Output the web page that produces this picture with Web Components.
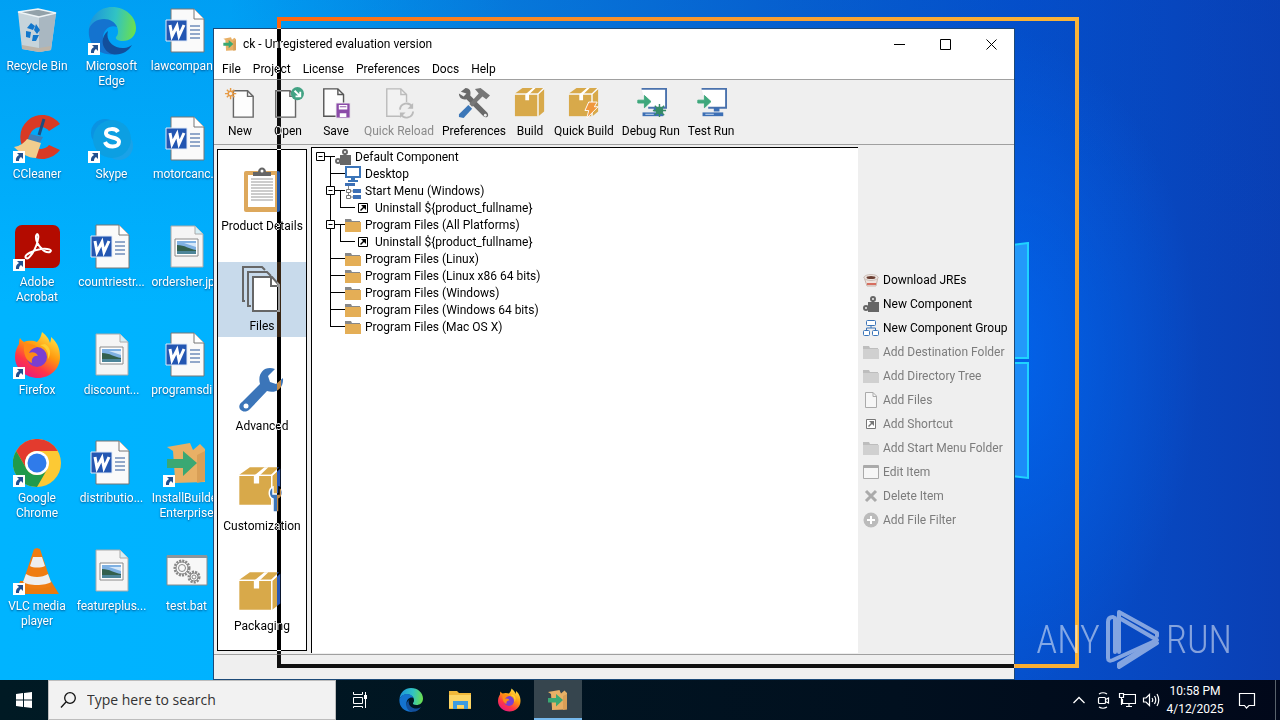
<!DOCTYPE html>
<html lang="en">
<head>
<meta charset="utf-8">
<meta name="viewport" content="width=device-width, initial-scale=1">
<title>ck - Unregistered evaluation version</title>
<style>
    html, body {
        margin: 0;
        height: 100%;
    }
    body {
        display: flex;
        flex-direction: column;
        overflow: hidden;
        font: 12px/15px Roboto, "Open Sans", sans-serif;
        color: #000;
    }
</style>
</head>
<body>
<desk-top>
    <desk-icon icon="bin">Recycle Bin</desk-icon>
    <desk-icon icon="edge" link>Microsoft Edge</desk-icon>
    <desk-icon icon="word">lawcompan...</desk-icon>
    <desk-icon icon="ccleaner" link>CCleaner</desk-icon>
    <desk-icon icon="skype" link>Skype</desk-icon>
    <desk-icon icon="word">motorcanc...</desk-icon>
    <desk-icon icon="acrobat" link>Adobe Acrobat</desk-icon>
    <desk-icon icon="word">countriestr...</desk-icon>
    <desk-icon icon="photo">ordersher.jpg</desk-icon>
    <desk-icon icon="firefox" link>Firefox</desk-icon>
    <desk-icon icon="photo">discount...</desk-icon>
    <desk-icon icon="word">programsdi...</desk-icon>
    <desk-icon icon="chrome" link>Google Chrome</desk-icon>
    <desk-icon icon="word">distributio...</desk-icon>
    <desk-icon icon="installer" link>InstallBuilder Enterprise</desk-icon>
    <desk-icon icon="vlc" link>VLC media player</desk-icon>
    <desk-icon icon="photo">featureplus...</desk-icon>
    <desk-icon icon="bat">test.bat</desk-icon>

    <app-window slot="window" caption="ck - Unregistered evaluation version">
        <menu-item slot="menu">File</menu-item>
        <menu-item slot="menu">Project</menu-item>
        <menu-item slot="menu">License</menu-item>
        <menu-item slot="menu">Preferences</menu-item>
        <menu-item slot="menu">Docs</menu-item>
        <menu-item slot="menu">Help</menu-item>

        <tool-button slot="tools" icon="new" wide>New</tool-button>
        <tool-button slot="tools" icon="open" wide>Open</tool-button>
        <tool-button slot="tools" icon="save" wide>Save</tool-button>
        <tool-button slot="tools" icon="reload" off>Quick Reload</tool-button>
        <tool-button slot="tools" icon="tools">Preferences</tool-button>
        <tool-button slot="tools" icon="box">Build</tool-button>
        <tool-button slot="tools" icon="quickbox">Quick Build</tool-button>
        <tool-button slot="tools" icon="debugrun">Debug Run</tool-button>
        <tool-button slot="tools" icon="testrun">Test Run</tool-button>

        <side-item slot="side" icon="clipboard">Product Details</side-item>
        <side-item slot="side" icon="files" current>Files</side-item>
        <side-item slot="side" icon="wrench">Advanced</side-item>
        <side-item slot="side" icon="custombox">Customization</side-item>
        <side-item slot="side" icon="bigbox">Packaging</side-item>

        <tree-row icon="component" depth="0" open>Default Component</tree-row>
        <tree-row icon="monitor" depth="1">Desktop</tree-row>
        <tree-row icon="startmenu" depth="1" open>Start Menu (Windows)</tree-row>
        <tree-row icon="shortcut" depth="2" last>Uninstall ${product_fullname}</tree-row>
        <tree-row icon="folder" depth="1" open>Program Files (All Platforms)</tree-row>
        <tree-row icon="shortcut" depth="2" last>Uninstall ${product_fullname}</tree-row>
        <tree-row icon="folder" depth="1">Program Files (Linux)</tree-row>
        <tree-row icon="folder" depth="1">Program Files (Linux x86 64 bits)</tree-row>
        <tree-row icon="folder" depth="1">Program Files (Windows)</tree-row>
        <tree-row icon="folder" depth="1">Program Files (Windows 64 bits)</tree-row>
        <tree-row icon="folder" depth="1" last>Program Files (Mac OS X)</tree-row>

        <action-button slot="actions" icon="java">Download JREs</action-button>
        <action-button slot="actions" icon="component">New Component</action-button>
        <action-button slot="actions" icon="group">New Component Group</action-button>
        <action-button slot="actions" icon="greyfolder" off>Add Destination Folder</action-button>
        <action-button slot="actions" icon="greyfolder" off>Add Directory Tree</action-button>
        <action-button slot="actions" icon="greyfile" off>Add Files</action-button>
        <action-button slot="actions" icon="greyshortcut" off>Add Shortcut</action-button>
        <action-button slot="actions" icon="greyfolder" off>Add Start Menu Folder</action-button>
        <action-button slot="actions" icon="edit" off>Edit Item</action-button>
        <action-button slot="actions" icon="delete" off>Delete Item</action-button>
        <action-button slot="actions" icon="plus" off>Add File Filter</action-button>
    </app-window>
</desk-top>
<task-bar></task-bar>

<script>
// shared pieces of artwork
const page = (w, h, f, stroke, fill = '#fdfdfd') =>
    `<path d="M1 1H${w - f}L${w - 1} ${f}V${h - 1}H1Z" fill="${fill}" stroke="${stroke}" stroke-width="1.5"/><path d="M${w - f} 1V${f}H${w - 1}" fill="none" stroke="${stroke}" stroke-width="1.5"/>`;
const carton = '<path d="M1 7 9 1H31L25 7Z" fill="#d8a94a"/><path d="M26 8 32 2V26L26 31Z" fill="#d8a94a"/><path d="M1 8H25V31H1Z" fill="#d8a94a"/><path d="M12 8 20 1H23L16 8V14H12Z" fill="#fff"/><path d="M1 7.5H25.5V31M25.5 7.5 32 1.500" stroke="#fff" fill="none"/>';
const fox = `<defs><linearGradient id="f1" x1=".8" y1="0" x2=".2" y2="1"><stop offset="0" stop-color="#ffe94a"/><stop offset=".4" stop-color="#ff980e"/><stop offset=".7" stop-color="#ff3647"/><stop offset="1" stop-color="#e31587"/></linearGradient></defs>
    <path d="M29 1c5 4 7 7 8 11 1-3 1-4 1-6 8 7 9 14 9 20 0 12-10 21-22 21S2 38 2 26c0-6 2-10 4-13 0-2 0-4 1-6 1 2 3 3 4 4 5-2 10-1 13 0 3-3 4-6 5-10Z" fill="url(#f1)"/>
    <circle cx="24" cy="26" r="10" fill="#7b3fd0"/><path d="M11 12c5 1 10 1 13 4-4 1-7 3-8 6 4-2 8 0 9 3-4-1-7 3-6 7-6-2-9-9-8-20Z" fill="#ff8a16"/><path d="M27 14c6 2 9 7 8 14 4-6 2-12-3-15Z" fill="#ffcf33"/>`;
const edge = `<defs><linearGradient id="e1" x1="0" y1=".4" x2="1" y2=".5"><stop offset="0" stop-color="#1b94dc"/><stop offset=".55" stop-color="#31c3c4"/><stop offset="1" stop-color="#6be04d"/></linearGradient></defs>
    <path d="M1 22C2 9 12 0 24 0c14 0 24 10 24 21 0 9-7 13-13 13-5 0-8-2-7-4 2-2 2-4 2-6 0-7-7-11-14-11C9 13 3 17 1 22Z" fill="url(#e1)"/>
    <path d="M1 22c2-6 8-10 15-10 6 0 11 3 13 8-6-3-14 2-14 11 0 8 6 14 13 16C12 50-1 38 1 22Z" fill="#1473cf"/>
    <path d="M20 24c-3 10 6 18 16 17 3 0 6-2 8-3-4 7-12 11-20 9-10-3-13-16-4-23Z" fill="#124f9c"/>`;
const drawer = `<path d="M4 8 27 4 30 11 37 5 42 10 42 12V43L12 44V40L10 12Z" fill="#e8b066"/><path d="M34 16 42 12V42L34 44Z" fill="#d99f57"/><path d="M4 20H20V12L34 24 20 37V29H4Z" fill="#3aa873"/>`;
const greyFold = '<path d="M0 2H6L7 4H15V15H0Z" fill="#bdbdbd"/><path d="M0 5H16V15H0Z" fill="#d0d0d0"/>';
const screen = `<path d="M7 3V2H33V22H14" fill="#fff" stroke="#4a72ad" stroke-width="2"/><path d="M0 0H7V22H0Z" fill="#efefef"/><path d="M20 22H26V26H20Z" fill="#3c6fb5"/><path d="M8 27H30V31H8Z" fill="#3c6fb5"/><path d="M11 29H20" stroke="#cfe0f2"/><path d="M3 14H10V9L17 15.500 10 22V17H3Z" fill="#3fa77c" stroke="#3fa77c"/>`;

// name: [viewBox, markup]
const ICONS = {
    bin: ['0 0 48 48', '<path d="M5 5 25 2 43 6 38 43 26 45 9 42Z" fill="#c7d4db"/><path d="M26 10 43 6 38 43 26 45Z" fill="#a9b7c1"/><path d="M5 5 25 2 43 6 26 10Z" fill="#93a2aa" stroke="#eef4f7" stroke-width="1.500"/><path d="M9 38 26 41 38 39V43L26 45 9 42Z" fill="#bdb4a8"/><path d="m14 21 4-5 4 3-2 4Zm9-4 4 6-3 4-3-4Zm-10 7 5 1-1 6-4-1Zm7 4h6l-3 6h-4Z" fill="#1277cc"/>'],
    edge: ['0 0 48 48', edge],
    word: ['0 0 48 48', '<path d="M8 2H31L41 12V45H8Z" fill="#fafafa" stroke="#777"/><path d="M31 2V12H41" fill="#fff" stroke="#777"/><path d="M27 19H37M27 23H37M27 27H37M27 31H37" stroke="#2b579a" stroke-width="1.200"/><path d="M3 13H24V34H3Z" fill="#2356b2" stroke="#dfe9f8"/><path d="M7 18 9 29 14 19 16 29 21 18" fill="none" stroke="#fff" stroke-width="3"/>'],
    photo: ['0 0 48 48', '<path d="M8 3H32L40 11V44H8Z" fill="#f5f5f5" stroke="#aaa"/><path d="M32 3V11H40" fill="#d5eef5" stroke="#aaa"/><path d="M12 16H35V33H12Z" fill="#fff" stroke="#8a8a8a"/><path d="M14 18H33V31H14Z" fill="#7fb1e3"/><path d="M14 22c8 0 12 4 19 5v1H14Z" fill="#33604d"/><path d="M14 28H33V31H14Z" fill="#4d8599"/><path d="M21 20H33V24Z" fill="#d5e8fa"/>'],
    ccleaner: ['0 0 48 48', '<path d="M47 9A22 22 0 1 0 47 35L36 30A11 11 0 1 1 36 16Z" fill="#d83a25"/><path d="M31 4 26 20" stroke="#1d4e80" stroke-width="3"/><path d="M17 19 30 22 26 29 14 26Z" fill="#3f7fb8"/><path d="M14 24 28 28 23 43C15 43 7 38 1 32 7 31 11 28 14 24Z" fill="#f1cd8e"/>'],
    skype: ['0 0 48 48', '<circle cx="17" cy="18" r="14" fill="#0a93e2"/><circle cx="31" cy="31" r="14" fill="#1aa2e8"/><circle cx="24" cy="24" r="19" fill="#0c9fe2"/><path d="M30 17c-2-4-12-4-12 1 0 6 13 3 13 9 0 6-12 6-14 0" fill="none" stroke="#fff" stroke-width="4"/>'],
    acrobat: ['0 0 48 48', '<rect x="2" y="2" width="45" height="43" rx="7" fill="#b30b00"/><path d="M13 35c-3-3 8-8 15-9 7-1 12 1 9 3-5 2-15-8-14-16 1-4 3-1 2 3-1 8-9 22-12 19Z" fill="none" stroke="#fff" stroke-width="2"/>'],
    firefox: ['0 0 48 48', fox],
    chrome: ['0 0 48 48', '<circle cx="24" cy="24" r="24" fill="#fcc934"/><path d="M3.200 12A24 24 0 0 1 44.800 12H24A12 12 0 0 0 13.600 30Z" fill="#e33b2e"/><path d="M3.200 12A24 24 0 0 0 24 48L34.400 30A12 12 0 0 1 13.600 30Z" fill="#209a4b"/><circle cx="24" cy="24" r="12" fill="#fff"/><circle cx="24" cy="24" r="9.500" fill="#2f7bea"/>'],
    installer: ['0 0 48 48', drawer],
    vlc: ['0 0 48 48', '<path d="M7 34 38 34 46 47H2Z" fill="#e97a0f"/><path d="M24 1 27 2 39 38C35 43 13 43 9 38L21 2Z" fill="#ef7c11"/><path d="M20 10H29L32 19C28 21 20 21 17 19Z" fill="#eee"/><path d="M13 27C19 31 29 31 35 27L38 35C33 39 15 39 10 35Z" fill="#eee"/>'],
    bat: ['0 0 48 48', '<path d="M4 9H44V38H4Z" fill="#f7f7f7" stroke="#8a8a8a"/><path d="M4 8H44V11H4Z" fill="#8c959b"/><g fill="none" stroke="#888"><circle cx="19" cy="21" r="7" stroke-dasharray="2 1" stroke-width="3"/><circle cx="19" cy="21" r="6" fill="#f7f7f7"/><circle cx="19" cy="21" r="3.500"/><circle cx="31" cy="30" r="5" stroke-dasharray="2 1" stroke-width="3"/><circle cx="31" cy="30" r="4" fill="#f7f7f7"/><circle cx="31" cy="30" r="2"/></g>'],
    link: ['0 0 12 12', '<path d="M0 0H12V12H0Z" fill="#fff"/><path d="M4 2H10V8L8 6C6.500 7 6 8 6 10H3C2.500 7 4 5 6 4Z" fill="#22508f"/>'],
    app: ['0 0 48 48', drawer],

    new: ['0 0 34 34', `<g transform="translate(9 3)">${page(23, 30, 7, '#666')}</g><path d="M7 1V13M1 7H13M3 3 11 11M11 3 3 11" stroke="#e69a45" stroke-width="1.500"/><circle cx="7" cy="7" r="2.500" fill="#efefef" stroke="#e69a45" stroke-width="1.500"/>`],
    open: ['0 0 34 34', `<g transform="translate(3 3)">${page(23, 30, 7, '#666')}</g><circle cx="27" cy="7" r="7" fill="#43a384"/><path d="M24 4 30 10M30 5V10H25" stroke="#fff" stroke-width="2" fill="none"/>`],
    save: ['0 0 34 34', `<g transform="translate(3 1)">${page(23, 31, 7, '#555')}</g><path d="M17 17H32V33H17Z" fill="#8b4ba8" stroke="#efefef"/><path d="M20 19H29V24H20ZM21 28H28V32H21Z" fill="#fff"/><path d="M21 21H28" stroke="#8b4ba8"/>`],
    reload: ['0 0 34 34', `<g transform="translate(3 1)">${page(23, 31, 7, '#bbb', '#f2f2f2')}</g><circle cx="25" cy="25" r="9" fill="#efefef"/><path d="M18 24a7 7 0 0 1 13-3M32 26a7 7 0 0 1-13 3" fill="none" stroke="#bbb" stroke-width="2"/><path d="M32 17V23H26ZM18 33V27H24Z" fill="#bbb"/>`],
    tools: ['0 0 34 34', '<path d="M3 5 8 1C13 1 14 5 13 9L31 27C34 31 30 34 27 31L9 13C5 14 1 12 1 7L6 10 9 7Z" fill="#6a6a6a"/><path d="M18 2 24 1 34 9 30 13 26 10 15 21 12 18 22 7Z" fill="#777"/><path d="M11 19 15 23 6 33 1 32V29Z" fill="#3c77b8"/><circle cx="29" cy="30" r="1.500" fill="#efefef"/>'],
    box: ['0 0 34 34', carton],
    quickbox: ['0 0 34 34', carton + '<path d="M22 16H31L28 21H32L20 33 22 25H18Z" fill="#f0973d" stroke="#fff"/>'],
    debugrun: ['0 0 34 34', screen + '<path d="M26 18V32M19 25H33M21 20 31 30M31 20 21 30" stroke="#368c66" stroke-width="1.500"/><circle cx="26" cy="25" r="4" fill="#368c66"/>'],
    testrun: ['0 0 34 34', screen],

    clipboard: ['0 0 48 48', '<rect x="6" y="5" width="36" height="41" rx="2" fill="#dda85c"/><path d="M10 9H37V41H10Z" fill="#fff"/><path d="M13 13H35M13 16H35M13 19H35M13 22H35M13 25H35M13 28H35M13 31H35M13 34H35" stroke="#999"/><path d="M15 10V6H20C20 0 28 0 28 6H33V10Z" fill="#666"/><circle cx="24" cy="5" r="1.500" fill="#fff"/>'],
    files: ['0 0 48 48', '<path d="M7 35H5V1H24L27 4" fill="none" stroke="#666" stroke-width="2"/><path d="M13 40H10V6H29L33 10" fill="none" stroke="#666" stroke-width="2"/><path d="M15 11H34L41 19V45H15Z" fill="#fff" stroke="#666" stroke-width="2"/><path d="M33 11V20H41" fill="none" stroke="#666" stroke-width="2"/>'],
    wrench: ['0 0 48 48', '<path d="M37 3 30 10 32 16 38 18 45 12C46 22 38 28 29 25L12 43C5 50-3 41 4 36L22 18C19 7 27-1 37 3Z" fill="#3b75b9"/><circle cx="8" cy="40" r="2.500" fill="#fff"/>'],
    custombox: ['0 0 48 48', '<g transform="translate(0 0) scale(1.320 1.250)">' + carton + '</g><path d="M35 21V28H41V21C46 23 45 31 41 33V46H35V33C30 31 30 23 35 21Z" fill="#3b75b9" stroke="#fff" stroke-width="1.500"/>'],
    bigbox: ['0 0 48 48', '<g transform="translate(0 5) scale(1.320 1.250)">' + carton + '</g>'],

    component: ['0 0 16 16', '<path d="M5 6H16V16H5Z" fill="#666"/><g fill="none" stroke="#666" stroke-width="2"><circle cx="10" cy="3" r="2"/><circle cx="3" cy="12" r="2"/></g><path d="M9 5H11V7H9Z" fill="#666"/>'],
    monitor: ['0 0 16 16', '<path d="M1 1H15V11H1Z" fill="#fff" stroke="#3b75b9" stroke-width="2"/><path d="M6 12H10V14H13V16H3V14H6Z" fill="#3b75b9"/>'],
    startmenu: ['0 0 16 16', '<path d="M0 0H10V3H0ZM8 6H16V10H8ZM8 12H16V16H8Z" fill="#3c6fb5"/><path d="M3.500 3V14H8M3.500 8H8" stroke="#888" fill="none"/><path d="M1.500 6.500H5.500V9.500H1.500ZM1.500 12.500H5.500V15.500H1.500Z" fill="#fff" stroke="#777"/>'],
    shortcut: ['0 0 16 16', '<path d="M3.500 3.500H12.500V12.500H3.500Z" fill="#fff" stroke="#000"/><path d="M6 5H11V10Z" fill="#000"/><path d="M5.500 10.500 9 7" stroke="#000" stroke-width="1.500"/>'],
    folder: ['0 0 16 16', '<path d="M0 2H6L7 4H15V6H0Z" fill="#888"/><path d="M0 5H16V15H0Z" fill="#e4ae56"/>'],
    java: ['0 0 16 16', '<path d="M1 5H15L13 14H4Z" fill="#eee4df" stroke="#c9b5ac"/><ellipse cx="8" cy="5.500" rx="7" ry="3" fill="#eee8e4" stroke="#cdbfb8"/><ellipse cx="8" cy="5.500" rx="4.500" ry="1.500" fill="#6d4034"/><path d="M4 12H13" stroke="#d76e5f" stroke-width="2"/>'],
    group: ['0 0 16 16', '<g fill="#fff" stroke="#3b75b9"><rect x="3.500" y=".5" width="9" height="5" rx="1"/><rect x=".5" y="10.500" width="6" height="5" rx="1"/><rect x="9.500" y="10.500" width="6" height="5" rx="1"/><path d="M8 6V8M3.500 10V8H12.500V10" fill="none"/></g>'],
    greyfolder: ['0 0 16 16', greyFold],
    greyfile: ['0 0 16 16', '<path d="M2.500.5H10L13.500 4V15.500H2.500Z" fill="#f6f6f6" stroke="#aaa"/><path d="M10 .5V4.500H13.500" fill="none" stroke="#aaa"/>'],
    greyshortcut: ['0 0 16 16', '<path d="M3.500 3.500H12.500V12.500H3.500Z" fill="#fff" stroke="#777"/><path d="M6 5H11V10Z" fill="#777"/><path d="M5.500 10.500 9 7" stroke="#777" stroke-width="1.500"/>'],
    edit: ['0 0 16 16', '<path d="M.5 1.500H15.500V14.500H.5Z" fill="#f6f6f6" stroke="#aaa"/><path d="M0 3H16" stroke="#aaa" stroke-width="2"/>'],
    delete: ['0 0 16 16', '<path d="M3 3 13 13M13 3 3 13" stroke="#aaa" stroke-width="3"/>'],
    plus: ['0 0 16 16', '<circle cx="8" cy="8" r="7.500" fill="#bbb"/><path d="M8 4V12M4 8H12" stroke="#fff" stroke-width="2"/>'],

    min: ['0 0 11 11', '<path d="M0 5.500H11" stroke="#000"/>'],
    max: ['0 0 11 11', '<path d="M.5.5H10.500V10.500H.5Z" fill="none" stroke="#000"/>'],
    close: ['0 0 11 11', '<path d="M.5.5 10.500 10.500M10.500.5.5 10.500" stroke="#000"/>'],

    start: ['0 0 16 16', '<path d="M0 2 7 1V7.500H0ZM8 1 16 0V7.500H8ZM0 8.500H7V15L0 14ZM8 8.500H16V16L8 15Z" fill="#fff"/>'],
    search: ['0 0 16 16', '<circle cx="10" cy="6" r="5.300" fill="none" stroke="#111" stroke-width="1.300"/><path d="M6 10 1 15.500" stroke="#111" stroke-width="1.300"/>'],
    taskview: ['0 0 16 16', '<path d="M1.500 0V2.500H10.500V0M1.500 5.500H10.500V11.500H1.500ZM1.500 16V14.500H10.500V16M13.500 0V16" fill="none" stroke="#fff"/><path d="M12 3H15V7H12Z" fill="#fff"/>'],
    explorer: ['0 0 24 24', '<path d="M1 3H9L11 5H23V21H1Z" fill="#f0b83a"/><path d="M1 7H23V20H1Z" fill="#fcd566"/><path d="M5 13H20V21H16V17H9V21H5Z" fill="#3d9be0"/>'],
    chevron: ['0 0 18 18', '<path d="M3.500 12 9 6.500 14.500 12" fill="none" stroke="#fff" stroke-width="1.300"/>'],
    meet: ['0 0 18 18', '<g fill="none" stroke="#fff" stroke-width="1.200"><rect x="4.500" y="6.500" width="7" height="6" rx="1"/><path d="M11.500 8.500 14.500 7V12L11.500 10.500M5 3Q9 .5 13 3M5 16Q9 18.500 13 16"/></g>'],
    network: ['0 0 18 18', '<path d="M5.500 3.500H17.500V12.500H4.500V8M8 15.500H14M11 12.500V15.500M1.500 2.500H5.500V6.500H1.500ZM3.500 6.500V14" fill="none" stroke="#fff" stroke-width="1.200"/>'],
    speaker: ['0 0 18 18', '<path d="M1.500 7H4L7.500 3.500V14.500L4 11H1.500ZM10 7Q11.500 9 10 11M12.500 5Q15 9 12.500 13M15 3Q18.500 9 15 15" fill="none" stroke="#fff" stroke-width="1.200"/>'],
    notes: ['0 0 18 18', '<path d="M1.500 2.500H16.500V14.500H11L8.500 17 6.500 14.500H1.500Z" fill="none" stroke="#fff" stroke-width="1.200"/>'],
    anyrun: ['0 0 56 64', '<g fill="none" stroke="#fff" stroke-width="4" stroke-linejoin="round" stroke-linecap="round"><path d="M8 9Q3 9 3 14V50Q3 54 8 52L52 32 16 11"/><path d="M10 44V10"/><path d="M14 44V4L52 25V28"/><path d="M52 35 14 59V56L46 36"/></g>']
};

// base class: puts the markup of the subclass in an open shadow root
class BaseElement extends HTMLElement {
    constructor() {
        super();
        this.attachShadow({ mode: 'open' });
    }
    connectedCallback() {
        this.shadowRoot.innerHTML = this.render();
    }
    get icon() {
        return this.getAttribute('icon');
    }
}

class UiIcon extends BaseElement {
    render() {
        const [box, art] = ICONS[this.getAttribute('name')];
        return `
        <style>
            :host { display: block; flex: none; width: 16px; height: 16px; }
            svg { display: block; width: 100%; height: 100%; }
        </style>
        <svg viewBox="${box}" aria-hidden="true">${art}</svg>`;
    }
}

class DeskTop extends BaseElement {
    render() {
        return `
        <style>
            :host {
                display: block;
                flex: 1;
                min-height: 0;
                position: relative;
                isolation: isolate;
                overflow: hidden;
                background:
                    radial-gradient(ellipse 200px 330px at 1000px 360px, rgba(0, 112, 255, .6), rgba(0, 90, 230, 0)),
                    linear-gradient(180deg, rgba(0, 70, 190, .18), rgba(0, 0, 0, 0) 45%),
                    linear-gradient(90deg, #00b4ff 0, #00b2ff 18%, #0782e0 40%, #0764d2 62%, #0550cc 80%, #0a3fb4 100%);
            }
            .panes {
                position: absolute;
                left: 892px;
                top: 242px;
                width: 137px;
                height: 238px;
            }
            .icons {
                display: grid;
                grid-template-columns: 74px 75px 75px;
                grid-auto-rows: 108px;
                width: min-content;
            }
            /* outline of the window while it is dragged: inverts what lies under it */
            .drag {
                position: absolute;
                inset: 17px 201px 12px 277px;
                border: 4px solid #fff;
                mix-blend-mode: difference;
                pointer-events: none;
            }
            .mark {
                position: absolute;
                right: 48px;
                bottom: 8px;
                display: flex;
                align-items: center;
                gap: 5px;
                color: #fff;
                opacity: .5;
                font: 300 38px/64px "Roboto Condensed", "Open Sans Condensed", Roboto, sans-serif;
            }
            .mark ui-icon { width: 56px; height: 64px; }
        </style>
        <svg class="panes" viewBox="0 0 137 238" preserveAspectRatio="none" aria-hidden="true">
            <path d="M0 18 136 1V116H0Z" fill="#2399fa" stroke="#1fd3ff" stroke-width="2"/>
            <path d="M0 121H136V236L0 220Z" fill="#1c8cf8" stroke="#1fd3ff" stroke-width="2"/>
        </svg>
        <div class="icons"><slot></slot></div>
        <slot name="window"></slot>
        <div class="drag"></div>
        <div class="mark"><span>ANY</span><ui-icon name="anyrun"></ui-icon><span>RUN</span></div>`;
    }
}

class DeskIcon extends BaseElement {
    render() {
        return `
        <style>
            :host { display: block; }
            button {
                display: flex;
                flex-direction: column;
                align-items: center;
                gap: 4px;
                width: 100%;
                padding: 7px 0 0;
                border: 0;
                background: none;
                font: inherit;
                color: #fff;
                text-shadow: 0 1px 2px rgba(0, 40, 90, .7);
            }
            .art { position: relative; }
            .art ui-icon { width: 48px; height: 48px; }
            .art .link { position: absolute; left: 0; bottom: 0; width: 12px; height: 12px; }
        </style>
        <button type="button">
            <span class="art"><ui-icon name="${this.icon}"></ui-icon>${this.hasAttribute('link') ? '<ui-icon class="link" name="link"></ui-icon>' : ''}</span>
            <span><slot></slot></span>
        </button>`;
    }
}

class AppWindow extends BaseElement {
    render() {
        return `
        <style>
            :host {
                position: absolute;
                inset: 28px 265px 0 213px;
                box-sizing: border-box;
                display: flex;
                flex-direction: column;
                border: 1px solid #1d4a78;
                background: #efefef;
            }
            .title {
                display: flex;
                align-items: center;
                height: 30px;
                padding-left: 8px;
                gap: 5px;
                background: #fff;
            }
            .title span { flex: 1; }
            .title button {
                display: grid;
                place-items: center;
                width: 46px;
                height: 30px;
                margin-left: -5px;
                padding: 0;
                border: 0;
                background: none;
            }
            .title button ui-icon { width: 11px; height: 11px; }
            .menu {
                display: flex;
                gap: 12px;
                height: 20px;
                align-items: center;
                padding-left: 8px;
                background: #fff;
                border-bottom: 1px solid #a0a0a0;
            }
            .tools {
                display: flex;
                gap: 2px;
                height: 64px;
                padding-left: 3px;
                border-bottom: 1px solid #a0a0a0;
            }
            .main { display: flex; flex: 1; min-height: 0; padding: 2px 0 1px 3px; gap: 4px; }
            nav {
                display: flex;
                flex-direction: column;
                gap: 25px;
                box-sizing: border-box;
                width: 90px;
                margin: 2px 0;
                padding-top: 12px;
                border: 1px solid #000;
                background: #fff;
            }
            .tree {
                flex: 1;
                border: solid #000;
                border-width: 1px 0 0 1px;
                background: #fff;
            }
            .actions {
                display: flex;
                flex-direction: column;
                justify-content: center;
                width: 151px;
                padding-left: 1px;
            }
            footer { height: 24px; border-top: 1px solid #a0a0a0; }
        </style>
        <header class="title">
            <ui-icon name="app"></ui-icon>
            <span>${this.getAttribute('caption')}</span>
            <button type="button" aria-label="Minimize"><ui-icon name="min"></ui-icon></button>
            <button type="button" aria-label="Maximize"><ui-icon name="max"></ui-icon></button>
            <button type="button" aria-label="Close"><ui-icon name="close"></ui-icon></button>
        </header>
        <div class="menu" role="menubar"><slot name="menu"></slot></div>
        <div class="tools"><slot name="tools"></slot></div>
        <div class="main">
            <nav><slot name="side"></slot></nav>
            <div class="tree" role="tree"><slot></slot></div>
            <div class="actions"><slot name="actions"></slot></div>
        </div>
        <footer></footer>`;
    }
}

class MenuItem extends BaseElement {
    render() {
        return `
        <style>
            :host { display: block; }
            button { padding: 0; border: 0; background: none; font: inherit; color: inherit; }
        </style>
        <button type="button" role="menuitem"><slot></slot></button>`;
    }
}

class ToolButton extends BaseElement {
    render() {
        return `
        <style>
            :host { display: block; }
            :host([wide]) button { width: 46px; }
            button {
                display: flex;
                flex-direction: column;
                align-items: center;
                gap: 5px;
                padding: 7px 3px 0;
                border: 0;
                background: none;
                font: inherit;
                color: inherit;
                white-space: nowrap;
            }
            button:disabled { color: #8a8a8a; }
            ui-icon { width: 32px; height: 32px; }
        </style>
        <button type="button" ${this.hasAttribute('off') ? 'disabled' : ''}><ui-icon name="${this.icon}"></ui-icon><span><slot></slot></span></button>`;
    }
}

class SideItem extends BaseElement {
    render() {
        return `
        <style>
            :host { display: block; }
            :host([current]) { background: #c8daeb; }
            button {
                display: flex;
                flex-direction: column;
                align-items: center;
                gap: 5px;
                width: 100%;
                height: 75px;
                padding: 4px 0 0;
                border: 0;
                background: none;
                font: inherit;
                color: inherit;
                white-space: nowrap;
            }
            ui-icon { width: 48px; height: 48px; }
        </style>
        <button type="button"><ui-icon name="${this.icon}"></ui-icon><span><slot></slot></span></button>`;
    }
}

class TreeRow extends BaseElement {
    // guide lines and the [-] box in front of the row
    rail() {
        const depth = Number(this.getAttribute('depth'));
        const width = 23 + depth * 10;
        const x = 8.5 + depth * 10;
        const open = this.hasAttribute('open');
        let d = `M${x} 8.5H${width + 1}`;
        if (depth > 0) d += `M${x} 0V${this.hasAttribute('last') ? 9 : 17}`;
        if (depth > 1) d += 'M18.5 0V17';
        if (open) d += `M${x + 10} 8V17`;
        const box = open ? `<path d="M${x - 4} 4.5h8v8h-8Z" fill="#fff"/><path d="M${x - 2} 8.5h4"/>` : '';
        return `<svg width="${width}" height="17" fill="none" stroke="#000" aria-hidden="true"><path d="${d}"/>${box}</svg>`;
    }
    render() {
        return `
        <style>
            :host { display: flex; align-items: center; height: 17px; white-space: nowrap; }
            svg { flex: none; }
            span { margin-left: 4px; padding-top: 2px; }
        </style>
        ${this.rail()}<ui-icon name="${this.icon}"></ui-icon><span role="treeitem"><slot></slot></span>`;
    }
}

class ActionButton extends BaseElement {
    render() {
        return `
        <style>
            :host { display: block; }
            button {
                display: flex;
                align-items: center;
                gap: 4px;
                height: 24px;
                padding: 0;
                border: 0;
                background: none;
                font: inherit;
                color: inherit;
                white-space: nowrap;
            }
            button:disabled { color: #7c7c7c; }
        </style>
        <button type="button" ${this.hasAttribute('off') ? 'disabled' : ''}><ui-icon name="${this.icon}"></ui-icon><span><slot></slot></span></button>`;
    }
}

class TaskBar extends BaseElement {
    render() {
        return `
        <style>
            :host {
                display: flex;
                height: 40px;
                background: linear-gradient(90deg, #001a24, #01101f 70%, #01081a);
                color: #fff;
            }
            button {
                display: grid;
                place-items: center;
                width: 48px;
                padding: 0;
                border: 0;
                background: none;
                font: inherit;
                color: inherit;
            }
            .search {
                display: flex;
                align-items: center;
                gap: 11px;
                box-sizing: border-box;
                width: 288px;
                padding-left: 11px;
                border: 1px solid #bdbdbd;
                background: #f2f2f2;
            }
            input {
                flex: 1;
                min-width: 0;
                padding: 0;
                border: 0;
                outline: 0;
                background: none;
                font: 14px/20px "Open Sans", "Noto Sans", sans-serif;
            }
            input::placeholder { color: #333; opacity: 1; }
            .apps { display: flex; flex: 1; gap: 1px; padding-left: 3px; }
            .apps ui-icon { width: 24px; height: 24px; }
            .apps .on { background: #36454e; box-shadow: inset 0 -2px #76b9ed; }
            .tray { display: flex; }
            .tray button { width: 24px; }
            .tray ui-icon { width: 18px; height: 18px; }
            .tray .clock { width: 64px; line-height: 18px; text-align: center; }
            .tray .notes { width: 40px; margin-right: 8px; }
            .peek { width: 4px; border-left: 1px solid #59636c; }
        </style>
        <button type="button" aria-label="Start"><ui-icon name="start"></ui-icon></button>
        <label class="search"><ui-icon name="search"></ui-icon><input type="text" placeholder="Type here to search" aria-label="Type here to search"></label>
        <button type="button" aria-label="Task View"><ui-icon name="taskview"></ui-icon></button>
        <div class="apps">
            <button type="button" aria-label="Microsoft Edge"><ui-icon name="edge"></ui-icon></button>
            <button type="button" aria-label="File Explorer"><ui-icon name="explorer"></ui-icon></button>
            <button type="button" aria-label="Firefox"><ui-icon name="firefox"></ui-icon></button>
            <button type="button" class="on" aria-label="InstallBuilder"><ui-icon name="app"></ui-icon></button>
        </div>
        <div class="tray">
            <button type="button" aria-label="Show hidden icons"><ui-icon name="chevron"></ui-icon></button>
            <button type="button" aria-label="Meet Now"><ui-icon name="meet"></ui-icon></button>
            <button type="button" aria-label="Network"><ui-icon name="network"></ui-icon></button>
            <button type="button" aria-label="Volume"><ui-icon name="speaker"></ui-icon></button>
            <button type="button" class="clock"><span>10:58 PM<br>4/12/2025</span></button>
            <button type="button" class="notes" aria-label="Notifications"><ui-icon name="notes"></ui-icon></button>
            <div class="peek"></div>
        </div>`;
    }
}

customElements.define('ui-icon', UiIcon);
customElements.define('desk-top', DeskTop);
customElements.define('desk-icon', DeskIcon);
customElements.define('app-window', AppWindow);
customElements.define('menu-item', MenuItem);
customElements.define('tool-button', ToolButton);
customElements.define('side-item', SideItem);
customElements.define('tree-row', TreeRow);
customElements.define('action-button', ActionButton);
customElements.define('task-bar', TaskBar);
</script>
</body>
</html>
